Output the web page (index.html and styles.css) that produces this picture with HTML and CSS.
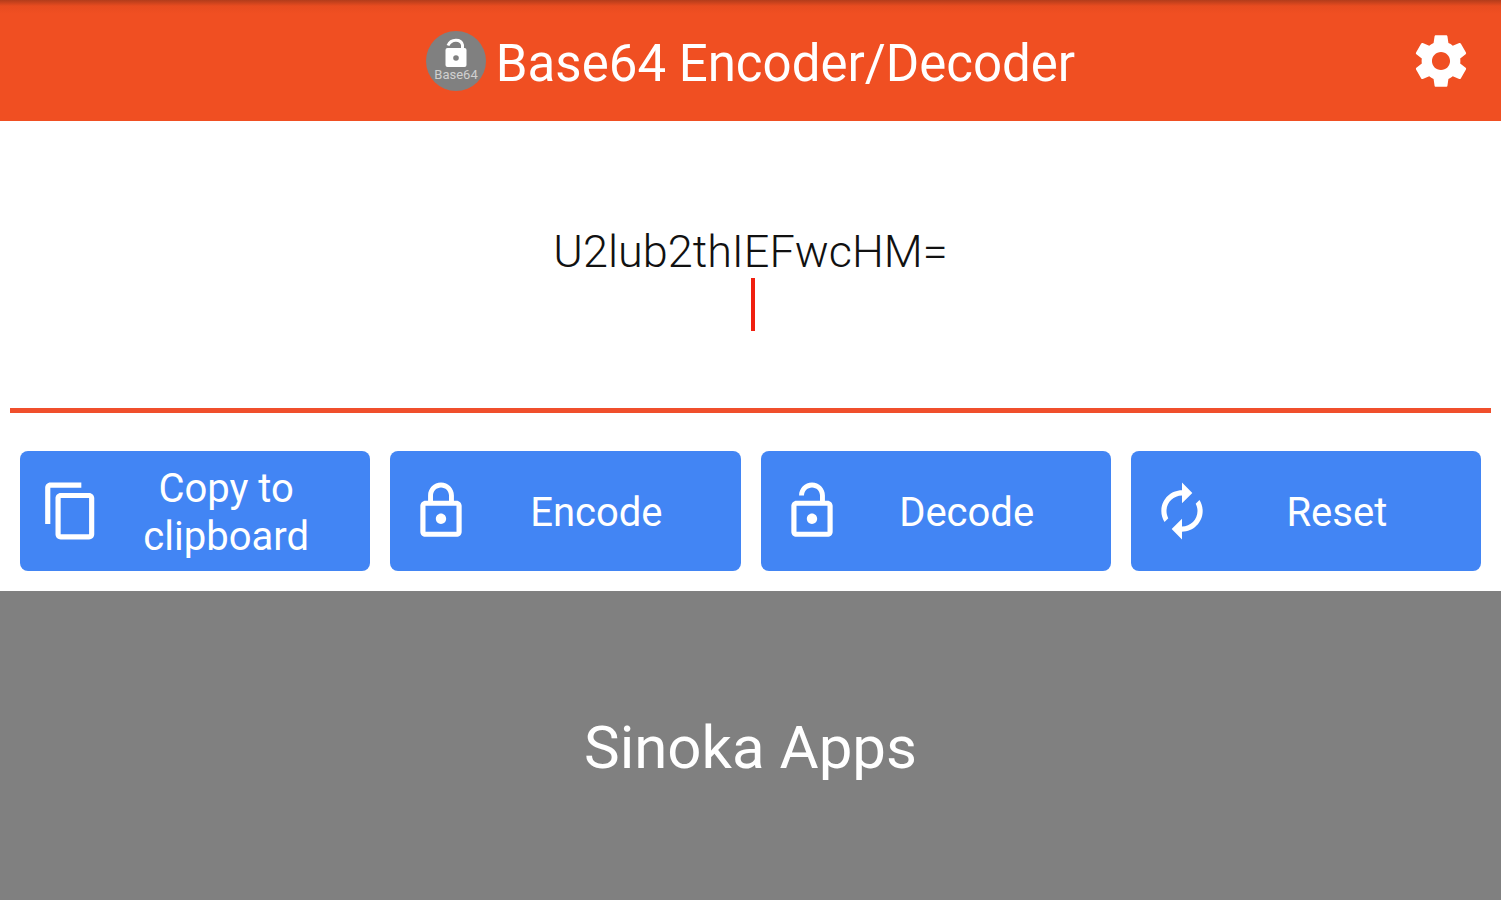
FILE: index.html
```html
<!DOCTYPE html>
<html lang="en">
<head>
<meta charset="utf-8">
<meta name="viewport" content="width=device-width, initial-scale=1">
<title>Base64 Encoder/Decoder</title>
<link rel="stylesheet" href="styles.css">
</head>
<body>
<header class="app-bar">
  <div class="brand">
    <svg class="logo" viewBox="0 0 60 60" aria-hidden="true">
      <circle cx="30" cy="30" r="30" fill="#808080"/>
      <path d="M22 14.500C25 7.500 35 7.500 36.500 14V19" fill="none" stroke="#fff" stroke-width="3"/>
      <rect x="19.500" y="17" width="21" height="19" rx="2" fill="#fff"/>
      <circle cx="30" cy="27" r="2.800" fill="#808080"/>
      <text class="logo-text" x="30" y="48" text-anchor="middle">Base64</text>
    </svg>
    <h1 class="title">Base64 Encoder/Decoder</h1>
  </div>
  <button class="settings" type="button" aria-label="Settings">
    <svg class="icon" viewBox="0 0 24 24" aria-hidden="true"><path d="M19.430 12.980c.04-.32.07-.64.07-.98s-.03-.66-.07-.98l2.110-1.650c.19-.15.24-.42.12-.64l-2-3.460c-.12-.22-.39-.3-.61-.22l-2.490 1c-.52-.4-1.080-.73-1.690-.98l-.38-2.650C14.460 2.180 14.250 2 14 2h-4c-.25 0-.46.18-.49.42l-.38 2.650c-.61.25-1.170.59-1.690.98l-2.490-1c-.23-.09-.49 0-.61.22l-2 3.460c-.13.22-.07.49.12.64l2.110 1.650c-.04.32-.07.65-.07.98s.03.66.07.98l-2.110 1.650c-.19.15-.24.42-.12.64l2 3.460c.12.22.39.3.61.22l2.490-1c.52.4 1.080.73 1.690.98l.38 2.650c.03.24.24.42.49.42h4c.25 0 .46-.18.49-.42l.38-2.650c.61-.25 1.170-.59 1.690-.98l2.490 1c.23.09.49 0 .61-.22l2-3.460c.12-.22.07-.49-.12-.64l-2.110-1.650zM12 15.500c-1.930 0-3.500-1.570-3.500-3.500s1.570-3.500 3.500-3.500 3.500 1.570 3.500 3.500-1.570 3.500-3.500 3.500z"/></svg>
  </button>
</header>
<main>
  <div class="editor">
    <textarea class="input" aria-label="Text to encode or decode" spellcheck="false">U2lub2thIEFwcHM=
</textarea>
    <span class="caret"></span>
  </div>
  <div class="actions">
    <button class="action" type="button">
      <svg class="icon" viewBox="0 0 24 24" aria-hidden="true"><path d="M16 1H4c-1.100 0-2 .9-2 2v14h2V3h12V1zm3 4H8c-1.100 0-2 .9-2 2v14c0 1.100.9 2 2 2h11c1.100 0 2-.9 2-2V7c0-1.100-.9-2-2-2zm0 16H8V7h11v14z"/></svg>
      <span class="label">Copy to clipboard</span>
    </button>
    <button class="action" type="button">
      <svg class="icon" viewBox="0 0 24 24" aria-hidden="true"><path d="M12 17c1.100 0 2-.9 2-2s-.9-2-2-2-2 .9-2 2 .9 2 2 2zm6-9h-1V6c0-2.760-2.240-5-5-5S7 3.240 7 6v2H6c-1.100 0-2 .9-2 2v10c0 1.100.9 2 2 2h12c1.100 0 2-.9 2-2V10c0-1.100-.9-2-2-2zM8.900 6c0-1.710 1.390-3.100 3.100-3.100s3.100 1.390 3.100 3.100v2H8.900V6zM18 20H6V10h12v10z"/></svg>
      <span class="label">Encode</span>
    </button>
    <button class="action" type="button">
      <svg class="icon" viewBox="0 0 24 24" aria-hidden="true"><path d="M12 17c1.100 0 2-.9 2-2s-.9-2-2-2-2 .9-2 2 .9 2 2 2zm6-9h-1V6c0-2.760-2.240-5-5-5S7 3.240 7 6h1.900c0-1.710 1.390-3.100 3.100-3.100s3.100 1.390 3.100 3.100v2H6c-1.100 0-2 .9-2 2v10c0 1.100.9 2 2 2h12c1.100 0 2-.9 2-2V10c0-1.100-.9-2-2-2zm0 12H6V10h12v10z"/></svg>
      <span class="label">Decode</span>
    </button>
    <button class="action" type="button">
      <svg class="icon" viewBox="0 0 24 24" aria-hidden="true"><path d="M12 6v3l4-4-4-4v3c-4.420 0-8 3.580-8 8 0 1.570.46 3.030 1.240 4.260L6.700 14.800c-.45-.83-.7-1.790-.7-2.800 0-3.310 2.690-6 6-6zm6.760 1.740L17.300 9.200c.44.84.7 1.790.7 2.800 0 3.310-2.690 6-6 6v-3l-4 4 4 4v-3c4.420 0 8-3.580 8-8 0-1.570-.46-3.030-1.240-4.260z"/></svg>
      <span class="label">Reset</span>
    </button>
  </div>
</main>
<footer class="banner">Sinoka Apps</footer>
</body>
</html>
```
FILE: styles.css
```css
* {
  box-sizing: border-box;
}

body {
  margin: 0;
  min-height: 100vh;
  display: flex;
  flex-direction: column;
  background: #fff;
  font-family: Roboto, "Liberation Sans", sans-serif;
}

button {
  border: 0;
  color: #fff;
  font: inherit;
  cursor: pointer;
}

.app-bar {
  display: grid;
  grid-template-columns: 1fr auto 1fr;
  align-items: center;
  padding: 0 29px;
  height: 121px;
  background: linear-gradient(#b23c1b, #e84c20 6px, #f04f22 14px);
  color: #fff;
}

.brand {
  grid-column: 2;
  display: flex;
  align-items: center;
  gap: 10px;
}

.logo {
  width: 60px;
  height: 60px;
}

.logo-text {
  fill: #d0d0d0;
  font-size: 13px;
}

.title {
  margin: 0;
  padding-top: 6px;
  font-size: 51px;
  font-weight: 400;
  line-height: 60px;
}

.settings {
  justify-self: end;
  display: flex;
  padding: 0;
  background: none;
}

.icon {
  flex: none;
  width: 62px;
  height: 62px;
  fill: currentColor;
}

.editor {
  position: relative;
  padding: 0 10px;
}

.input {
  display: block;
  width: 100%;
  height: 292px;
  padding: 104px 0 0;
  border: 0;
  border-bottom: 5px solid #f04f2c;
  outline: 0;
  resize: none;
  overflow: hidden;
  background: transparent;
  color: #111;
  font: 300 45px/53px Roboto, "Liberation Sans", sans-serif;
  text-align: center;
}

.caret {
  position: absolute;
  top: 157px;
  left: 50%;
  width: 4px;
  height: 53px;
  background: #f02010;
}

.actions {
  display: grid;
  grid-template-columns: repeat(4, 1fr);
  gap: 20px;
  padding: 38px 20px 20px;
}

.action {
  display: flex;
  align-items: center;
  min-height: 120px;
  padding: 0 20px;
  border-radius: 8px;
  background: #4285f4;
  font-size: 40px;
  line-height: 48px;
}

.label {
  flex: 1;
  padding-top: 4px;
}

.banner {
  flex: 1;
  display: flex;
  align-items: center;
  justify-content: center;
  padding-top: 4px;
  background: #808080;
  color: #fff;
  font-size: 60px;
  line-height: 72px;
}
```
